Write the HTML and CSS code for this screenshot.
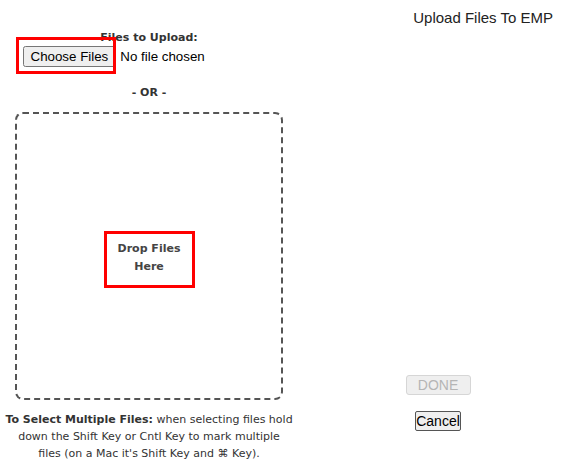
FILE: index.html
```html
<!DOCTYPE html>
<html>
<head>
<meta charset="utf-8">
<link rel="stylesheet" href="styles.css">
</head>
<body>
<div class="page">
  <div class="left">
    <div class="label">Files to Upload:</div>
    <div class="picker"><input type="file" multiple></div>
    <div class="mark mark-picker"></div>
    <div class="or">- OR -</div>
    <div class="dropzone">
      <div class="droptext">Drop Files<br>Here</div>
    </div>
    <p class="help"><b>To Select Multiple Files:</b> when selecting files hold down the Shift Key or Cntl Key to mark multiple<br>files (on a Mac it's Shift Key and &#8984; Key).</p>
  </div>
  <div class="right">
    <div class="title">Upload Files To EMP</div>
    <div class="actions">
      <button class="done" disabled>DONE</button>
      <button class="cancel">Cancel</button>
    </div>
  </div>
</div>
</body>
</html>
```
FILE: styles.css
```css
html, body {
  margin: 0;
  padding: 0;
  background: #fff;
}
body {
  font-family: "DejaVu Sans", sans-serif;
  color: #333;
  font-size: 11px;
}
.page {
  display: flex;
  width: 563px;
  height: 466px;
}
.left {
  width: 298px;
  position: relative;
  text-align: center;
  padding-top: 31px;
  box-sizing: border-box;
}
.label {
  font-weight: bold;
  line-height: 14px;
}
.picker {
  height: 23px;
  margin-top: 1px;
}
.picker input {
  font-family: Arial, "Liberation Sans", sans-serif;
  font-size: 13.33px;
  color: #000;
}
.mark {
  position: absolute;
  border: 3px solid #f00;
  box-sizing: border-box;
}
.mark-picker {
  left: 16px;
  top: 37px;
  width: 100px;
  height: 37px;
}
.or {
  font-weight: bold;
  margin-top: 17px;
  line-height: 14px;
}
.dropzone {
  margin: 12px 15px 0;
  height: 288px;
  border: 2px dashed #555;
  border-radius: 8px;
  box-sizing: border-box;
  display: flex;
  align-items: center;
  justify-content: center;
  padding-top: 6px;
}
.droptext {
  border: 3px solid #f00;
  width: 91px;
  height: 57px;
  box-sizing: border-box;
  font-weight: bold;
  line-height: 18px;
  padding-top: 6px;
  color: #444;
}
.help {
  margin: 11px 0 0;
  line-height: 17px;
  padding: 0 5px;
}
.right {
  flex: 1;
  display: flex;
  flex-direction: column;
}
.title {
  font-family: Arial, "Liberation Sans", sans-serif;
  font-size: 15px;
  color: #222;
  text-align: right;
  padding: 9px 10px 0 0;
}
.actions {
  margin-top: auto;
  margin-bottom: 35px;
  padding-left: 15px;
  display: flex;
  flex-direction: column;
  align-items: center;
  gap: 16px;
}
.actions button {
  font-family: Arial, "Liberation Sans", sans-serif;
  font-size: 14px;
  line-height: 16px;
}
.done {
  width: 65px;
  height: 20px;
  padding: 0;
  color: #b5b5b5;
  background: #efefef;
  border: 1px solid #d6d6d6;
  border-radius: 3px;
}
.cancel {
  height: 20px;
  padding: 0;
  color: #000;
  background: #efefef;
  border: 1px solid #555;
  border-radius: 2px;
}
```
